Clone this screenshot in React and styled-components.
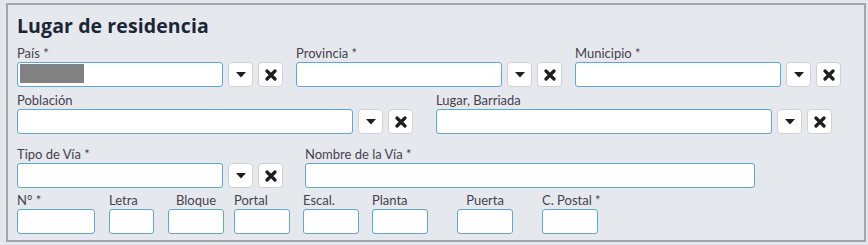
import React from "react";
import styled, { createGlobalStyle } from "styled-components";

const GlobalStyle = createGlobalStyle`
  html, body {
    margin: 0;
    padding: 0;
    background: #e4e8ec;
  }
  body {
    font-family: "Lato", "Open Sans", sans-serif;
  }
`;

const Panel = styled.section`
  box-sizing: border-box;
  margin: 3px 0 0 6px;
  width: 860px;
  height: 239px;
  border: 2px solid #a3a5a7;
  background: #e5e9ed;
  padding: 0 10px 0 9px;
`;

const Title = styled.h2`
  margin: 0;
  padding-top: 9px;
  font-family: "Open Sans", sans-serif;
  font-weight: 700;
  font-size: 19.5px;
  line-height: 24px;
  color: #1b2536;
  letter-spacing: 0.1px;
`;

const Row = styled.div`
  display: flex;
  align-items: flex-end;
  gap: ${(p) => p.$gap || 0}px;
  margin-top: ${(p) => p.$top || 0}px;
`;

const Field = styled.div`
  display: flex;
  flex-direction: column;
  width: ${(p) => p.$w}px;
  margin-left: ${(p) => p.$ml || 0}px;
`;

const Label = styled.label`
  display: block;
  font-size: 13px;
  line-height: 15px;
  height: 15px;
  color: #473f4d;
  text-align: ${(p) => p.$align || "left"};
  white-space: nowrap;
  margin-bottom: 1px;
`;

const Control = styled.div`
  display: flex;
  align-items: center;
  gap: 5px;
`;

const Input = styled.div`
  position: relative;
  box-sizing: border-box;
  flex: 1;
  height: 25px;
  background: #fff;
  border: 1.5px solid #5ea8d4;
  border-radius: 3px;
`;

const Redacted = styled.span`
  position: absolute;
  left: 2px;
  top: 1px;
  width: 64px;
  height: 19px;
  background: #818181;
`;

const IconButton = styled.button`
  box-sizing: border-box;
  width: 25px;
  height: 25px;
  padding: 0;
  display: flex;
  align-items: center;
  justify-content: center;
  background: #fff;
  border: 1px solid #cfd1d3;
  border-radius: 4px;
  color: #1e1e1e;
`;

const Caret = () => (
  <svg width="10" height="6" viewBox="0 0 10 6">
    <path d="M0 0 H10 L5 5.5 Z" fill="currentColor" />
  </svg>
);

const Cross = () => (
  <svg width="12" height="12" viewBox="0 0 12 12">
    <path
      d="M2 2 L10 10 M10 2 L2 10"
      stroke="currentColor"
      strokeWidth="3.2"
      strokeLinecap="round"
    />
  </svg>
);

function SelectField({ label, width, redacted }) {
  return (
    <Field $w={width}>
      <Label>{label}</Label>
      <Control>
        <Input>{redacted && <Redacted />}</Input>
        <IconButton aria-label="Desplegar">
          <Caret />
        </IconButton>
        <IconButton aria-label="Borrar">
          <Cross />
        </IconButton>
      </Control>
    </Field>
  );
}

function TextField({ label, width, ml, align }) {
  return (
    <Field $w={width} $ml={ml}>
      <Label $align={align}>{label}</Label>
      <Control>
        <Input />
      </Control>
    </Field>
  );
}

const smallFields = [
  { label: "N° *", width: 78, ml: 0 },
  { label: "Letra", width: 45, ml: 14 },
  { label: "Bloque", width: 56, ml: 14, align: "center" },
  { label: "Portal", width: 56, ml: 10 },
  { label: "Escal.", width: 56, ml: 13 },
  { label: "Planta", width: 56, ml: 13 },
  { label: "Puerta", width: 56, ml: 29, align: "center" },
  { label: "C. Postal *", width: 56, ml: 29 },
];

export default function App() {
  return (
    <>
      <GlobalStyle />
      <Panel>
        <Title>Lugar de residencia</Title>
        <Row $gap={13} $top={8}>
          <SelectField label="País *" width={266} redacted />
          <SelectField label="Provincia *" width={266} />
          <SelectField label="Municipio *" width={266} />
        </Row>
        <Row $gap={23} $top={6}>
          <SelectField label="Población" width={396} />
          <SelectField label="Lugar, Barriada" width={396} />
        </Row>
        <Row $gap={22} $top={13}>
          <SelectField label="Tipo de Vía *" width={266} />
          <TextField label="Nombre de la Vía *" width={450} />
        </Row>
        <Row $top={5}>
          {smallFields.map((f) => (
            <TextField key={f.label} {...f} />
          ))}
        </Row>
      </Panel>
    </>
  );
}
